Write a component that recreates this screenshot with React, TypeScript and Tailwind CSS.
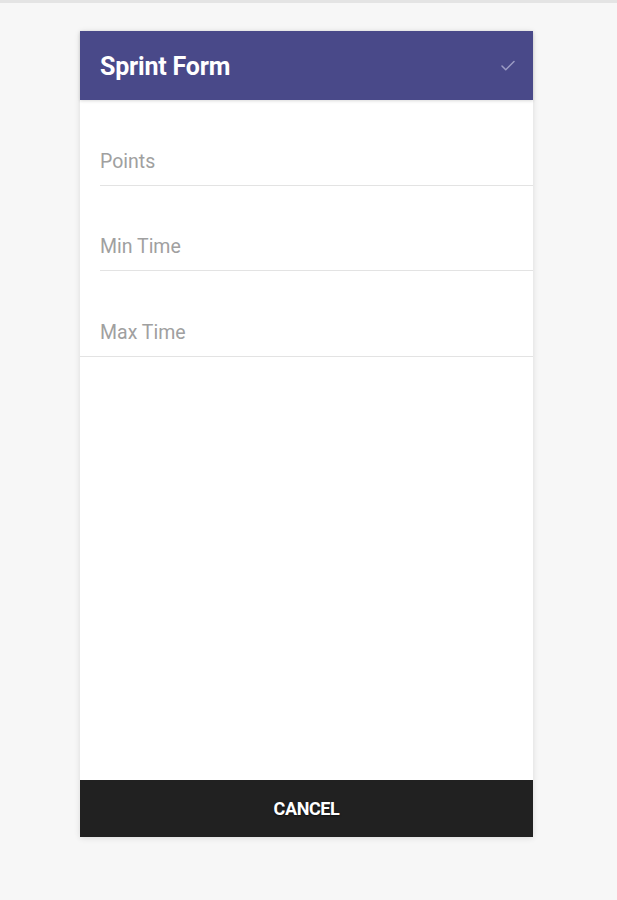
import { Check } from 'lucide-react';

const fields = [
  { label: 'Points', h: 'h-[86px]', last: false },
  { label: 'Min Time', h: 'h-[85px]', last: false },
  { label: 'Max Time', h: 'h-[86px]', last: true },
];

export default function App() {
  return (
    <div className="min-h-[900px] w-full bg-[#f7f7f7] font-['Roboto',sans-serif]">
      <div className="h-[3px] w-full bg-[#e4e4e4]" />
      <div className="ml-[80px] mt-[28px] flex h-[806px] w-[453px] flex-col bg-white shadow-[0_1px_6px_rgba(0,0,0,0.12)]">
        {/* header */}
        <div className="flex h-[69px] shrink-0 items-center justify-between bg-[#494989] pl-[20px] pr-[16px] shadow-[0_1px_3px_rgba(0,0,0,0.15)]">
          <h1 className="pt-[2px] text-[25px] font-bold tracking-[-0.2px] text-white">Sprint Form</h1>
          <Check className="h-[18px] w-[18px] text-[#9c9cc4]" strokeWidth={2} />
        </div>

        {/* fields */}
        <div className="flex flex-1 flex-col">
          {fields.map((f) => (
            <div key={f.label} className={`flex ${f.h} shrink-0 flex-col justify-end ${f.last ? '' : 'pl-[20px]'}`}>
              <div className={`border-b border-[#e3e3e3] pb-[10px] ${f.last ? 'pl-[20px]' : ''}`}>
                <span className="text-[19.5px] leading-[24px] text-[#a0a0a0]">{f.label}</span>
              </div>
            </div>
          ))}
        </div>

        {/* footer */}
        <button className="flex h-[57px] shrink-0 items-center justify-center bg-[#212121] text-[18px] font-bold tracking-[-0.4px] text-white [text-shadow:0_1px_2px_rgba(0,0,0,0.6)]">
          CANCEL
        </button>
      </div>
    </div>
  );
}
